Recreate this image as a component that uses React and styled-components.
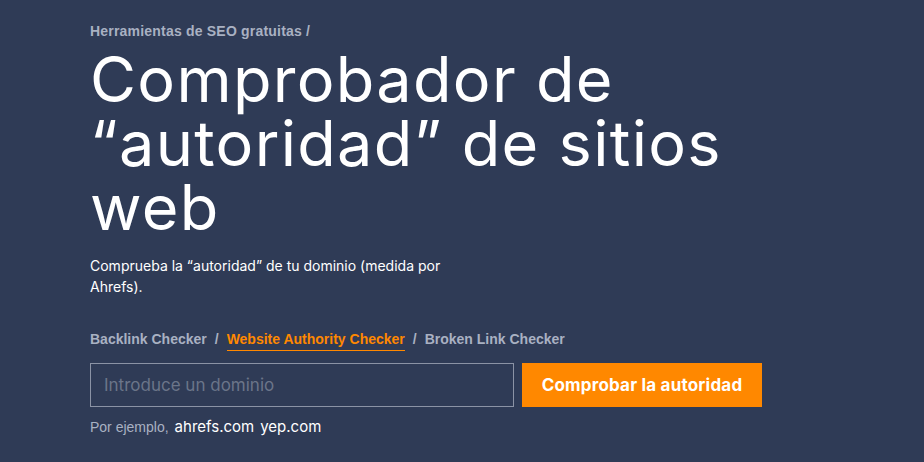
import React from "react"
import styled, { createGlobalStyle } from "styled-components"

// ------------------------------
// Global page styles
// ------------------------------
const GlobalStyle = createGlobalStyle`
  html, body {
    margin: 0;
    padding: 0;
    background: #2f3b56;
  }
  body {
    font-family: "Liberation Sans", Arial, sans-serif;
    -webkit-font-smoothing: antialiased;
  }
`

// ------------------------------
// Data
// ------------------------------
const tools = [
  { label: "Backlink Checker" },
  { label: "Website Authority Checker", active: true },
  { label: "Broken Link Checker" },
]

const examples = ["ahrefs.com", "yep.com"]

// ------------------------------
// The page
// ------------------------------
export default function App() {
  return (
    <>
      <GlobalStyle />
      <Hero>
        <Breadcrumb>Herramientas de SEO gratuitas /</Breadcrumb>
        <Title>Comprobador de “autoridad” de sitios web</Title>
        <Lead>Comprueba la “autoridad” de tu dominio (medida por Ahrefs).</Lead>

        <ToolNav>
          {tools.map((tool, i) => (
            <React.Fragment key={tool.label}>
              {i > 0 && <Separator>/</Separator>}
              <ToolLink $active={tool.active}>{tool.label}</ToolLink>
            </React.Fragment>
          ))}
        </ToolNav>

        <SearchForm onSubmit={(e) => e.preventDefault()}>
          <DomainInput placeholder="Introduce un dominio" />
          <SubmitButton type="submit">Comprobar la autoridad</SubmitButton>
        </SearchForm>

        <Examples>
          <span>Por ejemplo,</span>
          {examples.map((ex) => (
            <ExampleLink key={ex}>{ex}</ExampleLink>
          ))}
        </Examples>
      </Hero>
    </>
  )
}

// ------------------------------
// Styles
// ------------------------------
const Hero = styled.section`
  min-height: 462px;
  box-sizing: border-box;
  padding: 21px 90px 0;
  display: flex;
  flex-direction: column;
  align-items: flex-start;
`

const Breadcrumb = styled.div`
  font-size: 14px;
  line-height: 20px;
  font-weight: 700;
  letter-spacing: 0.2px;
  color: #a9b1c2;
`

const Title = styled.h1`
  margin: 6px 0 0;
  max-width: 700px;
  font-family: Inter, "Liberation Sans", sans-serif;
  font-size: 63px;
  line-height: 64px;
  font-weight: 400;
  letter-spacing: 1.3px;
  color: #ffffff;
`

const Lead = styled.p`
  margin: 16px 0 0;
  max-width: 380px;
  font-family: Inter, "Liberation Sans", sans-serif;
  font-size: 14px;
  line-height: 21px;
  color: #ffffff;
`

const ToolNav = styled.nav`
  margin-top: 32px;
  display: flex;
  align-items: baseline;
  gap: 8px;
  font-size: 14px;
  line-height: 20px;
  font-weight: 700;
`

const Separator = styled.span`
  color: #a9b1c2;
`

const ToolLink = styled.a`
  color: ${({ $active }) => ($active ? "#ff8800" : "#a9b1c2")};
  border-bottom: 1px solid ${({ $active }) => ($active ? "#ff8800" : "transparent")};
  padding-bottom: 1px;
  cursor: pointer;
`

const SearchForm = styled.form`
  margin-top: 12px;
  display: flex;
  gap: 8px;
`

const DomainInput = styled.input`
  width: 424px;
  height: 44px;
  box-sizing: border-box;
  padding: 0 13px;
  background: transparent;
  border: 1px solid #8b93a5;
  border-radius: 0;
  font-family: Inter, "Liberation Sans", sans-serif;
  font-size: 17px;
  color: #ffffff;
  outline: none;
  &::placeholder {
    color: #6b7589;
  }
`

const SubmitButton = styled.button`
  width: 240px;
  height: 44px;
  border: none;
  border-radius: 0;
  background: #ff8800;
  color: #ffffff;
  font-family: Inter, "Liberation Sans", sans-serif;
  font-size: 17px;
  font-weight: 700;
  letter-spacing: 0.2px;
  cursor: pointer;
`

const Examples = styled.div`
  margin-top: 10px;
  display: flex;
  align-items: baseline;
  gap: 6px;
  font-size: 14px;
  line-height: 20px;
  color: #a9b1c2;
`

const ExampleLink = styled.a`
  font-family: Inter, "Liberation Sans", sans-serif;
  font-size: 15px;
  color: #ffffff;
  cursor: pointer;
`
